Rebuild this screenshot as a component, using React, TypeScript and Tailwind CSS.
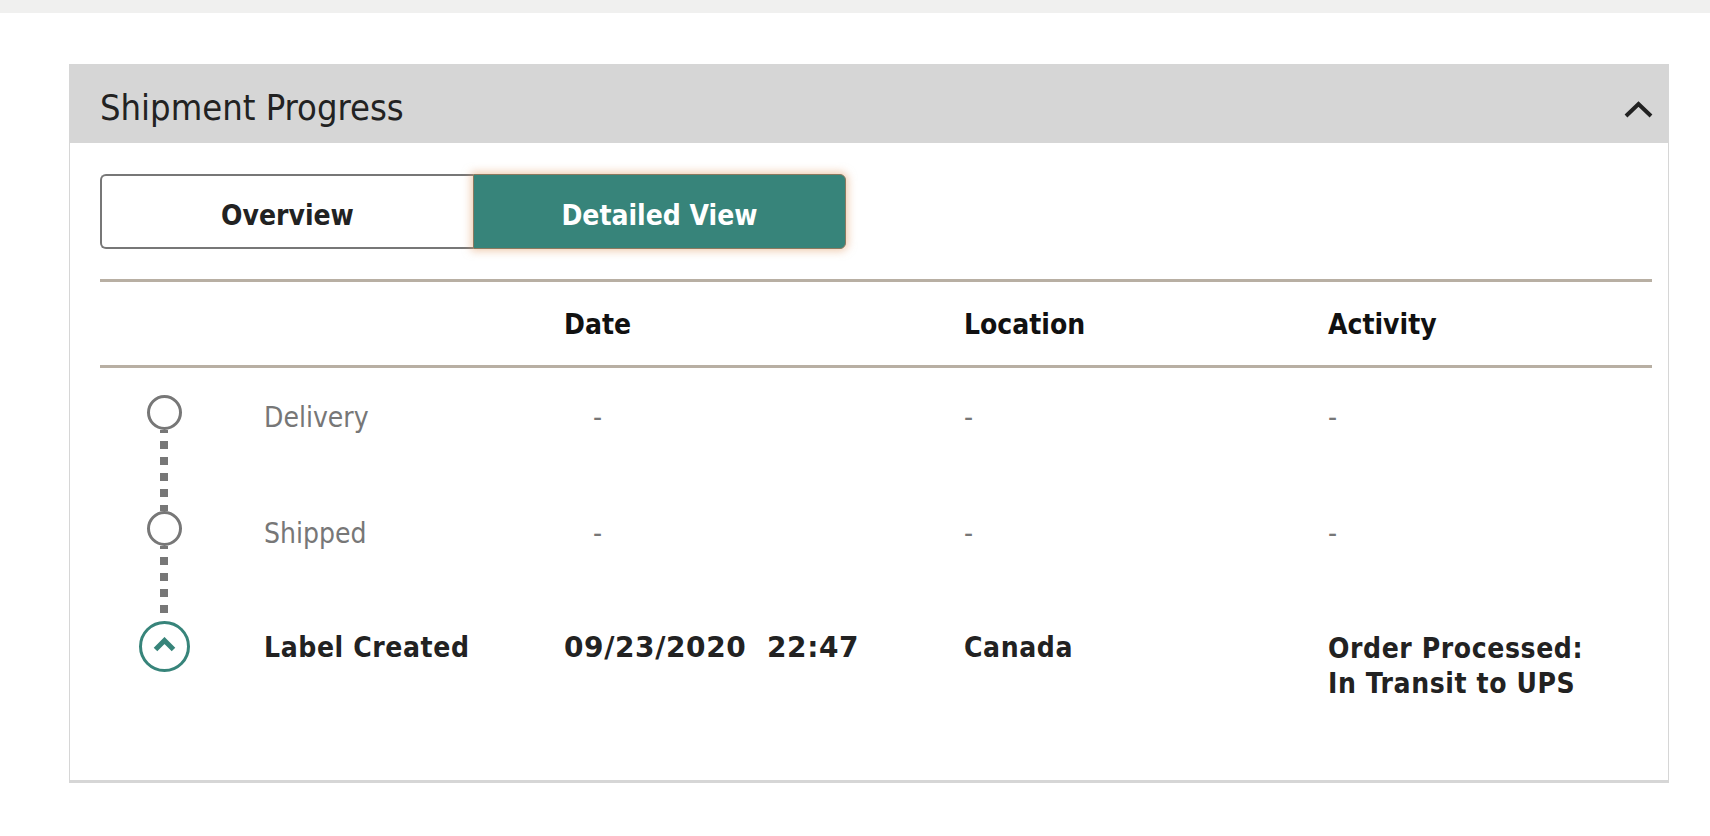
import React from 'react';

type Step = {
  name: string;
  date: string;
  location: string;
  activity: string[];
  done: boolean;
};

const steps: Step[] = [
  { name: 'Delivery', date: '-', location: '-', activity: ['-'], done: false },
  { name: 'Shipped', date: '-', location: '-', activity: ['-'], done: false },
  {
    name: 'Label Created',
    date: '09/23/2020\u00a0\u00a022:47',
    location: 'Canada',
    activity: ['Order Processed:', 'In Transit to UPS'],
    done: true,
  },
];

const cols = 'grid grid-cols-[164px_300px_400px_364px_1fr]';

function ChevronUp({ className, width, height, stroke }: { className?: string; width: number; height: number; stroke: number }) {
  return (
    <svg className={className} width={width} height={height} viewBox={`0 0 ${width} ${height}`} fill="none" aria-hidden="true">
      <polyline
        points={`${stroke / 2 + 1},${height - stroke / 2 - 1} ${width / 2},${stroke / 2 + 1} ${width - stroke / 2 - 1},${height - stroke / 2 - 1}`}
        stroke="currentColor"
        strokeWidth={stroke}
        strokeLinejoin="miter"
        strokeLinecap="butt"
      />
    </svg>
  );
}

function Dots() {
  return (
    <div className="w-[8px] flex-1 bg-[linear-gradient(to_bottom,#777777_0px,#777777_3px,transparent_3px,transparent_11px,#777777_11px,#777777_16px)] bg-[length:8px_16px]" />
  );
}

function Row({ step, last, height }: { step: Step; last: boolean; height: string }) {
  const textTone = step.done ? 'font-bold tracking-[0.6px] text-[#222222]' : 'text-[#777777]';
  const offset = step.done ? 'mt-[8px]' : 'mt-[4px]';
  return (
    <div className={`${cols} ${height}`}>
      <div className="flex w-[128px] flex-col items-center">
        {step.done ? (
          <div className="flex h-[51px] w-[51px] items-center justify-center rounded-full border-[3.5px] border-[#37847a] text-[#37847a]">
            <ChevronUp width={25} height={16} stroke={5} className="mb-[3px]" />
          </div>
        ) : (
          <div className="h-[35px] w-[35px] rounded-full border-[3px] border-[#777777]" />
        )}
        {!last && <Dots />}
      </div>
      <div className={`${textTone} ${offset} leading-[37px]`}>{step.name}</div>
      <div
        className={`${textTone} ${offset} ${step.done ? "font-['DejaVu_Sans',sans-serif] font-stretch-normal tracking-[0.3px]" : 'pl-[29px]'} leading-[37px]`}
      >
        {step.date}
      </div>
      <div className={`${textTone} ${offset} leading-[37px]`}>{step.location}</div>
      <div className={`${textTone} ${step.done ? 'mt-[10px] leading-[35px]' : 'mt-[4px] leading-[37px]'}`}>
        {step.activity.map((line) => (
          <div key={line}>{line}</div>
        ))}
      </div>
    </div>
  );
}

export default function App() {
  return (
    <div className="min-h-[836px] bg-white font-['DejaVu_Sans_Condensed','DejaVu_Sans',sans-serif] font-stretch-condensed">
      <div className="h-[13px] bg-[#f0f0ef]" />

      <div className="ml-[69px] mt-[51px] w-[1600px] border-x-[1.5px] border-b-[3px] border-[#d6d6d6]">
        {/* header */}
        <div className="flex h-[79px] items-center justify-between bg-[#d6d6d6] pl-[30px] pr-[14px]">
          <h2 className="mt-[9px] text-[36px] leading-none text-[#222222]">Shipment Progress</h2>
          <ChevronUp width={31} height={18} stroke={4} className="mt-[12px] text-[#222222]" />
        </div>

        {/* body */}
        <div className="pb-[47px] pl-[30px] pr-[16px] pt-[31px]">
          <div className="flex">
            <button
              type="button"
              className="flex h-[75px] w-[373px] items-center justify-center rounded-l-[6px] border-[2px] border-r-0 border-[#777777] bg-white pt-[8px] text-[28px] font-bold text-[#222222]"
            >
              Overview
            </button>
            <button
              type="button"
              className="flex h-[75px] w-[373px] items-center justify-center rounded-r-[6px] border-[1.5px] border-[#8c7a60] bg-[#37847a] pt-[8px] text-[28px] font-bold text-white shadow-[0_0_9px_2px_rgba(226,160,110,0.55)]"
            >
              Detailed View
            </button>
          </div>

          <div className={`${cols} mt-[30px] h-[89px] items-center border-y-[3px] border-[#b8afa3] pt-[2px] text-[28px] font-bold text-[#111111]`}>
            <div />
            <div />
            <div>Date</div>
            <div>Location</div>
            <div>Activity</div>
          </div>

          <div className="pt-[27px] text-[28px]">
            <Row step={steps[0]} last={false} height="h-[116px]" />
            <Row step={steps[1]} last={false} height="h-[110px]" />
            <Row step={steps[2]} last height="h-[112px]" />
          </div>
        </div>
      </div>
    </div>
  );
}
